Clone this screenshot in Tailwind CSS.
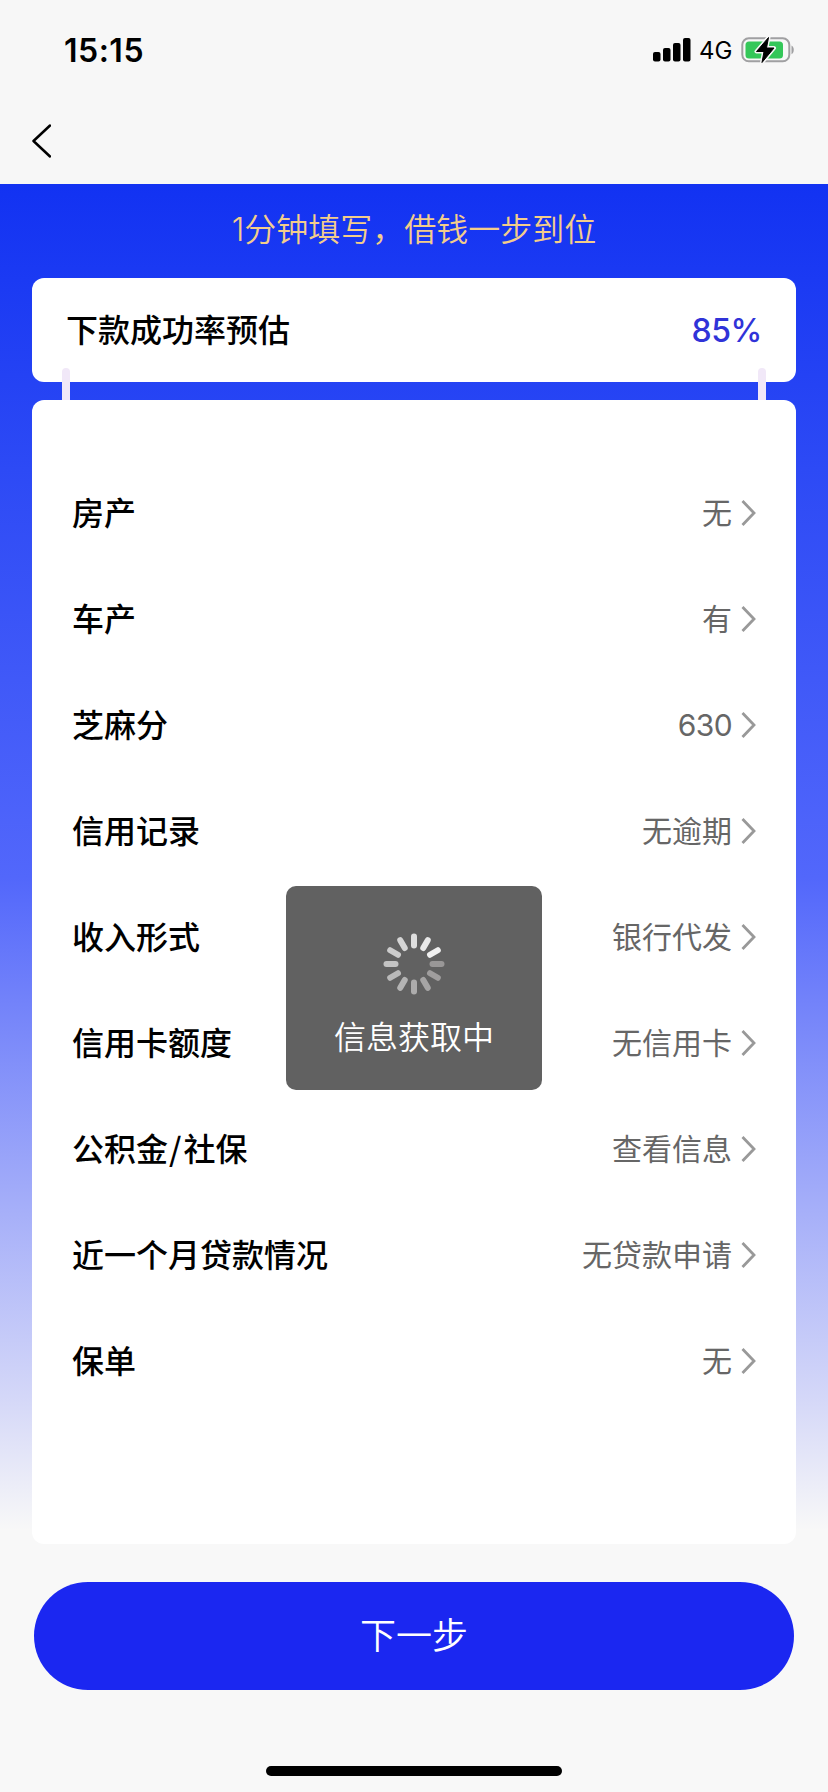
<!DOCTYPE html>
<html lang="zh-CN">
<head>
  <meta charset="UTF-8" />
  <title>信息填写</title>
  <meta name="viewport" content="width=device-width, initial-scale=1.0" />
  <script src="https://cdn.jsdelivr.net/npm/@tailwindcss/browser@4"></script>
</head>

<body class="relative w-[828px] h-[1792px] overflow-hidden flex flex-col bg-[#f8f8f8] text-black font-['Inter','Noto_Sans_CJK_SC',sans-serif]">

  <!-- Status bar -->
  <header class="h-[184px] shrink-0 bg-[#f7f7f7]">
    <div class="h-[100px] pl-16 pr-[33px] flex items-center justify-between">
      <span class="pt-px text-[32px] leading-none font-semibold tracking-[0.5px]">15:15</span>
      <div class="flex items-center">
        <svg class="w-[38px] h-6" viewBox="0 0 38 24">
          <rect x="0" y="14" width="7.500" height="9.500" rx="2" />
          <rect x="10" y="10" width="7.500" height="13.500" rx="2" />
          <rect x="20" y="5" width="7.500" height="18.500" rx="2" />
          <rect x="30" y="0" width="7.500" height="23.500" rx="2" />
        </svg>
        <span class="ml-2 pt-0.5 w-[34px] text-[24px] leading-none whitespace-nowrap">4G</span>
        <svg class="ml-2 w-[54px] h-7" viewBox="0 0 54 28">
          <rect x="1.300" y="2.300" width="47" height="23" rx="6.500" fill="none" stroke="#a0a0a2" stroke-width="2" />
          <path d="M50.500 9.500c3 1.200 3 7.600 0 8.800z" fill="#a0a0a2" />
          <rect x="4.500" y="5.500" width="37.500" height="17" rx="3.500" fill="#34c759" />
          <path d="M27.500 1.500L15.500 15.500h7.500L21 26.500L33 12h-7.500z" stroke="#f7f7f7" stroke-width="4" stroke-linejoin="round" />
          <path d="M27.500 1.500L15.500 15.500h7.500L21 26.500L33 12h-7.500z" stroke="#000" stroke-width="1" stroke-linejoin="round" />
        </svg>
      </div>
    </div>
    <button class="block ml-[31px] mt-6 w-5 h-[34px]">
      <svg class="w-5 h-[34px]" viewBox="0 0 20 34" fill="none" stroke="currentColor" stroke-width="2.500" stroke-linecap="round" stroke-linejoin="round">
        <path d="M19 1.500L2.500 17L19 32.500" />
      </svg>
    </button>
  </header>

  <!-- Form -->
  <main class="h-[1360px] shrink-0 px-8 flex flex-col bg-[linear-gradient(180deg,#1232f2_0%,#2d4af5_21%,#5267fb_51%,#7282fa_60%,#d5d8f8_89.5%,#f8f8f8_99%)]">
    <h1 class="h-[94px] pb-0.5 flex items-center justify-center text-[32px] font-[350] text-[#f3cd8b]">1分钟填写，借钱一步到位</h1>

    <!-- Success rate -->
    <section class="relative h-[104px] pt-0.5 pl-[34px] pr-[34px] flex items-center justify-between bg-white rounded-xl">
      <h2 class="text-[32px] font-medium">下款成功率预估</h2>
      <span class="text-[32px] font-medium tracking-[-0.4px] text-[#3033d8]">85%</span>
      <i class="absolute left-[30px] top-[90px] w-2 h-8 rounded-t bg-[#f1e8f8]"></i>
      <i class="absolute right-[30px] top-[90px] w-2 h-8 rounded-t bg-[#f1e8f8]"></i>
    </section>

    <!-- Profile items -->
    <section class="mt-[18px] h-[1144px] pt-[60px] pl-10 pr-10 bg-white rounded-xl">
      <div class="h-[106px] flex items-center">
        <span class="pt-0.5 text-[32px] font-medium">房产</span>
        <span class="ml-auto mr-[9px] text-[30px] text-[#666]">无</span>
        <svg class="w-[15px] h-[26px]" viewBox="0 0 15 26" fill="none" stroke="#999" stroke-width="2.800"><path d="M1.500 1L13 13L1.500 25" /></svg>
      </div>
      <div class="h-[106px] flex items-center">
        <span class="pt-0.5 text-[32px] font-medium">车产</span>
        <span class="ml-auto mr-[9px] text-[30px] text-[#666]">有</span>
        <svg class="w-[15px] h-[26px]" viewBox="0 0 15 26" fill="none" stroke="#999" stroke-width="2.800"><path d="M1.500 1L13 13L1.500 25" /></svg>
      </div>
      <div class="h-[106px] flex items-center">
        <span class="pt-0.5 text-[32px] font-medium">芝麻分</span>
        <span class="ml-auto mr-[9px] text-[30px] tracking-[-0.6px] text-[#666]">630</span>
        <svg class="w-[15px] h-[26px]" viewBox="0 0 15 26" fill="none" stroke="#999" stroke-width="2.800"><path d="M1.500 1L13 13L1.500 25" /></svg>
      </div>
      <div class="h-[106px] flex items-center">
        <span class="pt-0.5 text-[32px] font-medium">信用记录</span>
        <span class="ml-auto mr-[9px] text-[30px] text-[#666]">无逾期</span>
        <svg class="w-[15px] h-[26px]" viewBox="0 0 15 26" fill="none" stroke="#999" stroke-width="2.800"><path d="M1.500 1L13 13L1.500 25" /></svg>
      </div>
      <div class="h-[106px] flex items-center">
        <span class="pt-0.5 text-[32px] font-medium">收入形式</span>
        <span class="ml-auto mr-[9px] text-[30px] text-[#666]">银行代发</span>
        <svg class="w-[15px] h-[26px]" viewBox="0 0 15 26" fill="none" stroke="#999" stroke-width="2.800"><path d="M1.500 1L13 13L1.500 25" /></svg>
      </div>
      <div class="h-[106px] flex items-center">
        <span class="pt-0.5 text-[32px] font-medium">信用卡额度</span>
        <span class="ml-auto mr-[9px] text-[30px] text-[#666]">无信用卡</span>
        <svg class="w-[15px] h-[26px]" viewBox="0 0 15 26" fill="none" stroke="#999" stroke-width="2.800"><path d="M1.500 1L13 13L1.500 25" /></svg>
      </div>
      <div class="h-[106px] flex items-center">
        <span class="pt-0.5 text-[32px] font-medium">公积金<span class="ml-px mr-0.5 leading-none font-['Noto_Sans_CJK_SC',sans-serif]">/</span>社保</span>
        <span class="ml-auto mr-[9px] text-[30px] text-[#666]">查看信息</span>
        <svg class="w-[15px] h-[26px]" viewBox="0 0 15 26" fill="none" stroke="#999" stroke-width="2.800"><path d="M1.500 1L13 13L1.500 25" /></svg>
      </div>
      <div class="h-[106px] flex items-center">
        <span class="pt-0.5 text-[32px] font-medium">近一个月贷款情况</span>
        <span class="ml-auto mr-[9px] text-[30px] text-[#666]">无贷款申请</span>
        <svg class="w-[15px] h-[26px]" viewBox="0 0 15 26" fill="none" stroke="#999" stroke-width="2.800"><path d="M1.500 1L13 13L1.500 25" /></svg>
      </div>
      <div class="h-[106px] flex items-center">
        <span class="pt-0.5 text-[32px] font-medium">保单</span>
        <span class="ml-auto mr-[9px] text-[30px] text-[#666]">无</span>
        <svg class="w-[15px] h-[26px]" viewBox="0 0 15 26" fill="none" stroke="#999" stroke-width="2.800"><path d="M1.500 1L13 13L1.500 25" /></svg>
      </div>
    </section>
  </main>

  <!-- Next step -->
  <footer class="flex-1 pt-[38px] pb-4 flex flex-col items-center justify-between">
    <button class="w-[760px] h-[108px] rounded-full bg-[#1b27f1] text-white text-[36px] font-[350]">下一步</button>
    <div class="w-[296px] h-[10px] rounded-full bg-black"></div>
  </footer>

  <!-- Loading toast -->
  <div class="absolute left-[286px] top-[886px] w-64 h-[204px] pt-[47px] flex flex-col items-center rounded-[10px] bg-[#616161] text-white">
    <svg class="w-[62px] h-[62px]" viewBox="-31 -31 62 62" stroke-width="6" stroke-linecap="round">
      <path d="M0-27.500v9" stroke="#dedede" />
      <path d="M0-27.500v9" stroke="#e8e8e8" transform="rotate(30)" />
      <path d="M0-27.500v9" stroke="#f0f0f0" transform="rotate(60)" />
      <path d="M0-27.500v9" stroke="#999797" transform="rotate(90)" />
      <path d="M0-27.500v9" stroke="#a09e9e" transform="rotate(120)" />
      <path d="M0-27.500v9" stroke="#a6a5a5" transform="rotate(150)" />
      <path d="M0-27.500v9" stroke="#adacac" transform="rotate(180)" />
      <path d="M0-27.500v9" stroke="#b4b4b4" transform="rotate(210)" />
      <path d="M0-27.500v9" stroke="#bababa" transform="rotate(240)" />
      <path d="M0-27.500v9" stroke="#c3c3c3" transform="rotate(270)" />
      <path d="M0-27.500v9" stroke="#cccccc" transform="rotate(300)" />
      <path d="M0-27.500v9" stroke="#d5d5d5" transform="rotate(330)" />
    </svg>
    <p class="mt-[19px] text-[32px] leading-[48px] font-[350]">信息获取中</p>
  </div>

</body>
</html>
